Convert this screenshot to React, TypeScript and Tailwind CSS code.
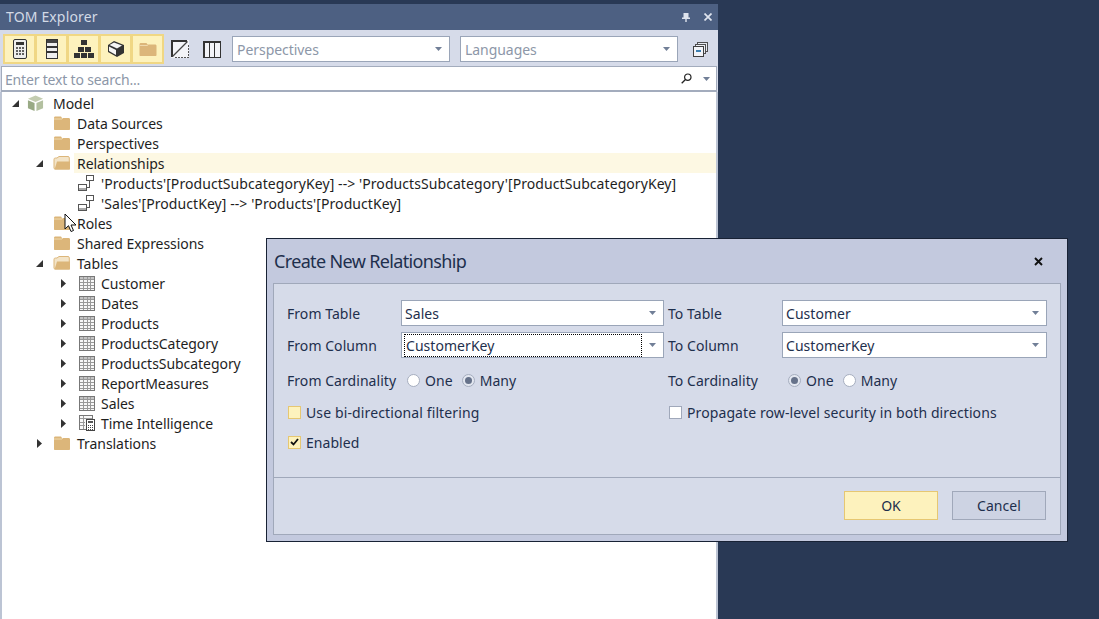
import React from "react";

const Caret = ({ className = "" }: { className?: string }) => (
  <svg width="7" height="4" viewBox="0 0 7 4" className={className}><path d="M0 0h7L3.500 4z" fill="#717f97" /></svg>
);

const FolderClosed = () => (
  <svg width="16" height="14" viewBox="0 0 16 14"><path d="M0 2C0 1 .5.500 1.500.500H7L8 2h6.500c1 0 1.500.5 1.500 1.500V13c0 .6-.4 1-1 1H1c-.6 0-1-.4-1-1z" fill="#dcb67a" /><path d="M0 3h8l1-1" stroke="#efd9ad" strokeWidth="1" fill="none" /></svg>
);

const FolderOpen = () => (
  <svg width="18" height="14" viewBox="0 0 18 14" className="-ml-px"><path d="M1 3.500C1 2.500 1.500 2 2.500 2H4L6 .5h9c.8 0 1.300.5 1.300 1.300V13H2c-.6 0-1-.4-1-1z" fill="#f3e4c8" stroke="#dcb67a" /><path d="M1.500 13.500 4 5.500h13v8z" fill="#dcb67a" /></svg>
);

const TableIcon = () => (
  <svg width="16" height="15" viewBox="0 0 16 15" className="ml-px" shapeRendering="crispEdges"><rect x=".5" y=".5" width="15" height="14" fill="#f8f8f8" stroke="#777" /><rect x="1" y="1" width="14" height="2" fill="#c4c4c4" /><path d="M4.500 1v13M8 1v13M11.500 1v13M1 3.500h14M1 6.500h14M1 9.500h14M1 12h14" stroke="#999" fill="none" /></svg>
);

const CalcTable = () => (
  <svg width="17" height="16" viewBox="0 0 17 16" className="ml-px" shapeRendering="crispEdges"><rect x=".5" y=".5" width="13" height="14" fill="#f8f8f8" stroke="#777" /><path d="M1 3.500h12M4.500 1v13M1 7h5M1 10.500h5" stroke="#999" fill="none" /><rect x="7.500" y="4.500" width="8" height="11" fill="#fff" stroke="#444" /><rect x="9" y="6" width="5" height="2" fill="#555" /><path d="M9 10h1M11 10h1M13 10h1M9 12h1M11 12h1M13 12h1M9 14h1M11 14h1M13 14h1" stroke="#444" /></svg>
);

const CubeModel = () => (
  <svg width="17" height="17" viewBox="0 0 18 17" className="-ml-[3px]"><path d="M9 0 17 3.500 9 7 1 3.500z" fill="#c3ccb0" /><path d="M1 5 8 8v8.500L1 13.500z" fill="#99aa85" /><path d="M17 5 10 8v8.500l7-3z" fill="#b3c0a0" /></svg>
);

const RelIcon = () => (
  <svg width="17" height="17" viewBox="0 0 17 17" shapeRendering="crispEdges"><rect x="8.500" y=".5" width="7" height="5" fill="#fff" stroke="#555" /><rect x=".5" y="9.500" width="8" height="6" fill="#fff" stroke="#555" /><rect x="1" y="13" width="7" height="2" fill="#aaa" /><path d="M11.500 6v6.500H9" stroke="#555" fill="none" /></svg>
);

const rows: { level: number; label: string; arrow?: "open" | "closed"; icon: React.ReactNode; hl?: boolean; wide?: boolean }[] = [
  { level: 0, label: "Model", arrow: "open", icon: <CubeModel /> },
  { level: 1, label: "Data Sources", icon: <FolderClosed /> },
  { level: 1, label: "Perspectives", icon: <FolderClosed /> },
  { level: 1, label: "Relationships", arrow: "open", icon: <FolderOpen />, hl: true },
  { level: 2, label: "'Products'[ProductSubcategoryKey] --> 'ProductsSubcategory'[ProductSubcategoryKey]", icon: <RelIcon />, wide: true },
  { level: 2, label: "'Sales'[ProductKey] --> 'Products'[ProductKey]", icon: <RelIcon />, wide: true },
  { level: 1, label: "Roles", icon: <FolderClosed /> },
  { level: 1, label: "Shared Expressions", icon: <FolderClosed /> },
  { level: 1, label: "Tables", arrow: "open", icon: <FolderOpen /> },
  { level: 2, label: "Customer", arrow: "closed", icon: <TableIcon /> },
  { level: 2, label: "Dates", arrow: "closed", icon: <TableIcon /> },
  { level: 2, label: "Products", arrow: "closed", icon: <TableIcon /> },
  { level: 2, label: "ProductsCategory", arrow: "closed", icon: <TableIcon /> },
  { level: 2, label: "ProductsSubcategory", arrow: "closed", icon: <TableIcon /> },
  { level: 2, label: "ReportMeasures", arrow: "closed", icon: <TableIcon /> },
  { level: 2, label: "Sales", arrow: "closed", icon: <TableIcon /> },
  { level: 2, label: "Time Intelligence", arrow: "closed", icon: <CalcTable /> },
  { level: 1, label: "Translations", arrow: "closed", icon: <FolderClosed /> },
];

const indent = ["pl-[9px]", "pl-[33px]", "pl-[57px]"];

function TreeRow({ r }: { r: (typeof rows)[number] }) {
  return (
    <div className={`flex h-5 items-center ${indent[r.level]}`}>
      <span className="flex w-[8px] justify-center">
        {r.arrow === "open" && (
          <svg width="7" height="7" viewBox="0 0 7 7"><path d="M7 0v7H0z" fill="#333" /></svg>
        )}
        {r.arrow === "closed" && (
          <svg width="5" height="9" viewBox="0 0 5 9"><path d="M0 0 5 4.500 0 9z" fill="#333" /></svg>
        )}
      </span>
      <span className="ml-[11px] flex w-[20px] shrink-0 items-center">{r.icon}</span>
      <span className={`flex h-5 flex-1 items-center pl-[3px] pt-[2px] ${r.hl ? "bg-[#fdf8e3]" : ""} ${r.wide ? "tracking-[0.07px]" : ""}`}>{r.label}</span>
    </div>
  );
}

const ToolBtn = ({ children }: { children: React.ReactNode }) => (
  <div className="-ml-px flex h-[30px] w-[33px] items-center justify-center border-2 border-[#f0d784] bg-[#fdf2bd] first:ml-0">{children}</div>
);

const Combo = ({ text, width, placeholder, focus }: { text: string; width: string; placeholder?: boolean; focus?: boolean }) => (
  <div className={`flex h-[26px] shrink-0 items-center border border-[#9aa5b8] bg-white ${width}`}>
    <span className={`flex h-[23px] flex-1 items-center pt-[2px] ${placeholder ? "ml-[3px] pl-px text-[#8d97a8]" : "ml-[2px] pl-px text-[#1e2f4d]"} ${focus ? "border border-dotted border-black" : ""}`}>{text}</span>
    <span className="flex w-[21px] shrink-0 justify-center"><Caret /></span>
  </div>
);

const Radio = ({ on }: { on?: boolean }) => (
  <span className={`flex h-[13px] w-[13px] items-center justify-center rounded-full border border-[#a6aebf] ${on ? "bg-[#e3e7f0]" : "bg-white"}`}>
    {on && <span className="h-[7px] w-[7px] rounded-full bg-[#66728a]" />}
  </span>
);

const Option = ({ label, on }: { label: string; on?: boolean }) => (
  <span className="flex items-center gap-[5px]"><Radio on={on} /><span className="pt-[2px]">{label}</span></span>
);

const Label = ({ children, width }: { children: React.ReactNode; width: string }) => (
  <span className={`shrink-0 pt-[2px] ${width}`}>{children}</span>
);

const Cell = ({ children }: { children: React.ReactNode }) => <div className="flex items-center">{children}</div>;

export default function App() {
  return (
    <div className="relative h-[619px] w-[1099px] overflow-hidden bg-[#293955] pt-[4px] font-['Noto_Sans',sans-serif] text-[14px] leading-5 tracking-[-0.05px] text-[#1e1e1e]">
      <section className="flex h-[615px] w-[718px] flex-col bg-[#d6dbe9]">
        <header className="flex h-[26px] shrink-0 items-center justify-between bg-[#4d6082] pl-[6px] pr-[6px] tracking-[0.15px] text-[#d3dae6]">
          <span>TOM Explorer</span>
          <span className="flex items-center gap-[14px]">
            <svg width="8" height="9" viewBox="0 0 8 9"><path d="M1.500 0h5v4.500H8V6H4.700v3H3.300V6H0V4.500h1.500z" fill="#dfe4ee" /></svg>
            <svg width="8" height="8" viewBox="0 0 8 8"><path d="M.5.5l7 7M7.500.5l-7 7" stroke="#dfe4ee" strokeWidth="1.700" /></svg>
          </span>
        </header>
        <div className="flex h-[36px] shrink-0 items-start pl-[3px] pt-[4px]">
          <div className="flex">
            <ToolBtn>
              <svg width="14" height="20" viewBox="0 0 14 20"><rect x=".5" y=".5" width="13" height="19" rx="1.500" fill="#eee" stroke="#333" /><rect x="3" y="3" width="8" height="3" fill="#333" /><path d="M3 9h2M6 9h2M9 9h2M3 12h2M6 12h2M9 12h2M3 15h2M6 15h2M9 15h2" stroke="#333" strokeWidth="1.500" /></svg>
            </ToolBtn>
            <ToolBtn>
              <svg width="12" height="20" viewBox="0 0 12 20" shapeRendering="crispEdges"><rect x=".5" y=".5" width="11" height="19" fill="#eee" stroke="#333" /><rect x="1" y="1" width="10" height="3" fill="#444" /><path d="M1 8h10M1 13h10" stroke="#333" strokeWidth="2" /></svg>
            </ToolBtn>
            <ToolBtn>
              <svg width="20" height="18" viewBox="0 0 20 18" fill="#333" shapeRendering="crispEdges"><rect x="7" y="0" width="6" height="5" /><rect x="3.500" y="6.500" width="6" height="5" /><rect x="10.500" y="6.500" width="6" height="5" /><rect x="0" y="13" width="6" height="5" /><rect x="7" y="13" width="6" height="5" /><rect x="14" y="13" width="6" height="5" /></svg>
            </ToolBtn>
            <ToolBtn>
              <svg width="18" height="18" viewBox="0 0 18 18"><path d="M7 1 17 5v8l-7 4-9-5V5z" fill="#333" /><path d="M7 2.500 15 5.500 10 8.500 2.500 5z" fill="#f5f5f5" /><path d="M2 6.500 9 10v5l-7-4z" fill="#f5f5f5" /></svg>
            </ToolBtn>
            <ToolBtn>
              <svg width="18" height="14" viewBox="0 0 17 14"><path d="M0 2.500C0 1.500.5 1 1.500 1H7l1 1.500h7.500c1 0 1.500.5 1.500 1.500v9c0 .6-.4 1-1 1H1c-.6 0-1-.4-1-1z" fill="#dcb67a" /><path d="M0 3.500h8l1-1" stroke="#efd9ad" fill="none" /></svg>
            </ToolBtn>
          </div>
          <div className="flex h-[30px] w-[32px] items-center justify-center">
            <svg width="18" height="18" viewBox="0 0 18 18" shapeRendering="crispEdges"><rect width="18" height="18" fill="#f3f4f8" /><path d="M1 17V1h15" stroke="#333" fill="none" strokeWidth="1.500" /><path d="M1.500 16.500 16.500 1.500" stroke="#444" strokeWidth="1.300" shapeRendering="auto" /><path d="M4 17h13.500V4" stroke="#555" strokeDasharray="1.500 1.500" fill="none" /></svg>
          </div>
          <div className="flex h-[30px] w-[32px] items-center justify-center">
            <svg width="18" height="17" viewBox="0 0 18 17" shapeRendering="crispEdges"><rect x=".75" y=".75" width="16.500" height="15.500" fill="#f3f4f8" stroke="#333" strokeWidth="1.500" /><path d="M6.500 1v15M11.500 1v15" stroke="#333" strokeWidth="1.500" /></svg>
          </div>
          <div className="ml-[4px] mt-[2px] flex gap-[10px]">
            <Combo text="Perspectives" width="w-[218px]" placeholder />
            <Combo text="Languages" width="w-[218px]" placeholder />
          </div>
          <div className="ml-[15px] flex h-[30px] items-center">
            <svg width="15" height="15" viewBox="0 0 16 16" shapeRendering="crispEdges"><rect x="4.500" y=".5" width="11" height="10" fill="#e8ebf2" stroke="#444" /><rect x="2.500" y="2.500" width="11" height="10" fill="#eef0f5" stroke="#444" /><rect x=".5" y="4.500" width="11" height="11" fill="#f3f4f8" stroke="#333" /><rect x="3" y="9" width="6" height="2" fill="#3c7fb1" /></svg>
          </div>
        </div>
        <div className="mx-px flex h-[26px] shrink-0 items-center justify-between border-x border-t border-b-2 border-[#a3acbd] bg-white pl-[3px] pr-[6px] tracking-[-0.18px] text-[#8d97a8]">
          <span className="pt-[2px]">Enter text to search...</span>
          <span className="flex items-center gap-[11px]">
            <svg width="11" height="11" viewBox="0 0 11 11"><circle cx="6.800" cy="4.200" r="3.200" fill="none" stroke="#222" strokeWidth="1.200" /><path d="M4.500 6.500 .7 10.300" stroke="#222" strokeWidth="1.300" /></svg>
            <Caret />
          </span>
        </div>
        <div className="flex-1 border-x-2 border-[#bcc4d4] bg-white pt-[1px]">
          {rows.map((r) => <TreeRow key={r.label} r={r} />)}
        </div>
      </section>

      <svg className="absolute left-[64px] top-[213px]" width="14" height="20" viewBox="0 0 14 20"><path d="M1 1v15l3.500-3.300L7 18.500l2.500-1-2.500-5.500h5z" fill="#fff" stroke="#111" strokeWidth="1" /></svg>

      <div className="absolute left-[266px] top-[238px] flex h-[304px] w-[802px] flex-col border border-[#182235] bg-[#c3c9de] tracking-[0.05px] text-[#1e2f4d]">
        <div className="flex h-[44px] shrink-0 items-center justify-between pl-[7px] pr-[24px]">
          <span className="text-[18px] tracking-[-0.65px]">Create New Relationship</span>
          <svg width="9" height="9" viewBox="0 0 9 9"><path d="M1 1l7 7M8 1 1 8" stroke="#111" strokeWidth="1.900" /></svg>
        </div>
        <div className="mx-[6px] mb-[6px] flex flex-1 flex-col border border-[#a0a8ba] bg-[#d6dbe9]">
          <div className="grid h-[193px] shrink-0 grid-cols-[381px_1fr] grid-rows-[26px_26px_32px_20px_28px] content-start gap-x-0 gap-y-[6px] pl-[13px] pr-[12px] pt-[16px]">
            <Cell><Label width="w-[114px]">From Table</Label><Combo text="Sales" width="w-[263px]" /></Cell>
            <Cell><Label width="w-[114px]">To Table</Label><Combo text="Customer" width="w-[265px]" /></Cell>
            <Cell><Label width="w-[114px]">From Column</Label><Combo text="CustomerKey" width="w-[263px]" focus /></Cell>
            <Cell><Label width="w-[114px]">To Column</Label><Combo text="CustomerKey" width="w-[265px]" /></Cell>
            <div className="flex items-center">
              <Label width="w-[120px]">From Cardinality</Label>
              <Option label="One" />
              <span className="ml-[9px]"><Option label="Many" on /></span>
            </div>
            <div className="flex items-center">
              <Label width="w-[120px]">To Cardinality</Label>
              <Option label="One" on />
              <span className="ml-[9px]"><Option label="Many" /></span>
            </div>
            <div className="flex items-center pl-px tracking-[0.12px]">
              <span className="h-[13px] w-[13px] shrink-0 border border-[#e6c772] bg-[#fdf2bd]" />
              <span className="ml-[5px] pt-[2px]">Use bi-directional filtering</span>
            </div>
            <div className="flex items-center pl-px tracking-[0.1px]">
              <span className="h-[13px] w-[13px] shrink-0 border border-[#a0a8ba] bg-white" />
              <span className="ml-[5px] pt-[2px]">Propagate row-level security in both directions</span>
            </div>
            <div className="col-span-2 flex items-center pl-px">
              <span className="flex h-[13px] w-[13px] shrink-0 items-center justify-center border border-[#e6c772] bg-[#fdf2bd]">
                <svg width="9" height="8" viewBox="0 0 9 8"><path d="M1 4l2.500 2.500L8 1" stroke="#111" strokeWidth="1.800" fill="none" /></svg>
              </span>
              <span className="ml-[5px] pt-[2px]">Enabled</span>
            </div>
          </div>
          <div className="flex flex-1 items-start justify-end gap-[14px] border-t border-[#a0a8ba] pr-[14px] pt-[13px]">
            <button className="h-[29px] w-[94px] border border-[#e6c772] bg-[#fdf2bd]">OK</button>
            <button className="h-[29px] w-[94px] border border-[#a0a8ba] bg-[#cdd3e3]">Cancel</button>
          </div>
        </div>
      </div>
    </div>
  );
}
